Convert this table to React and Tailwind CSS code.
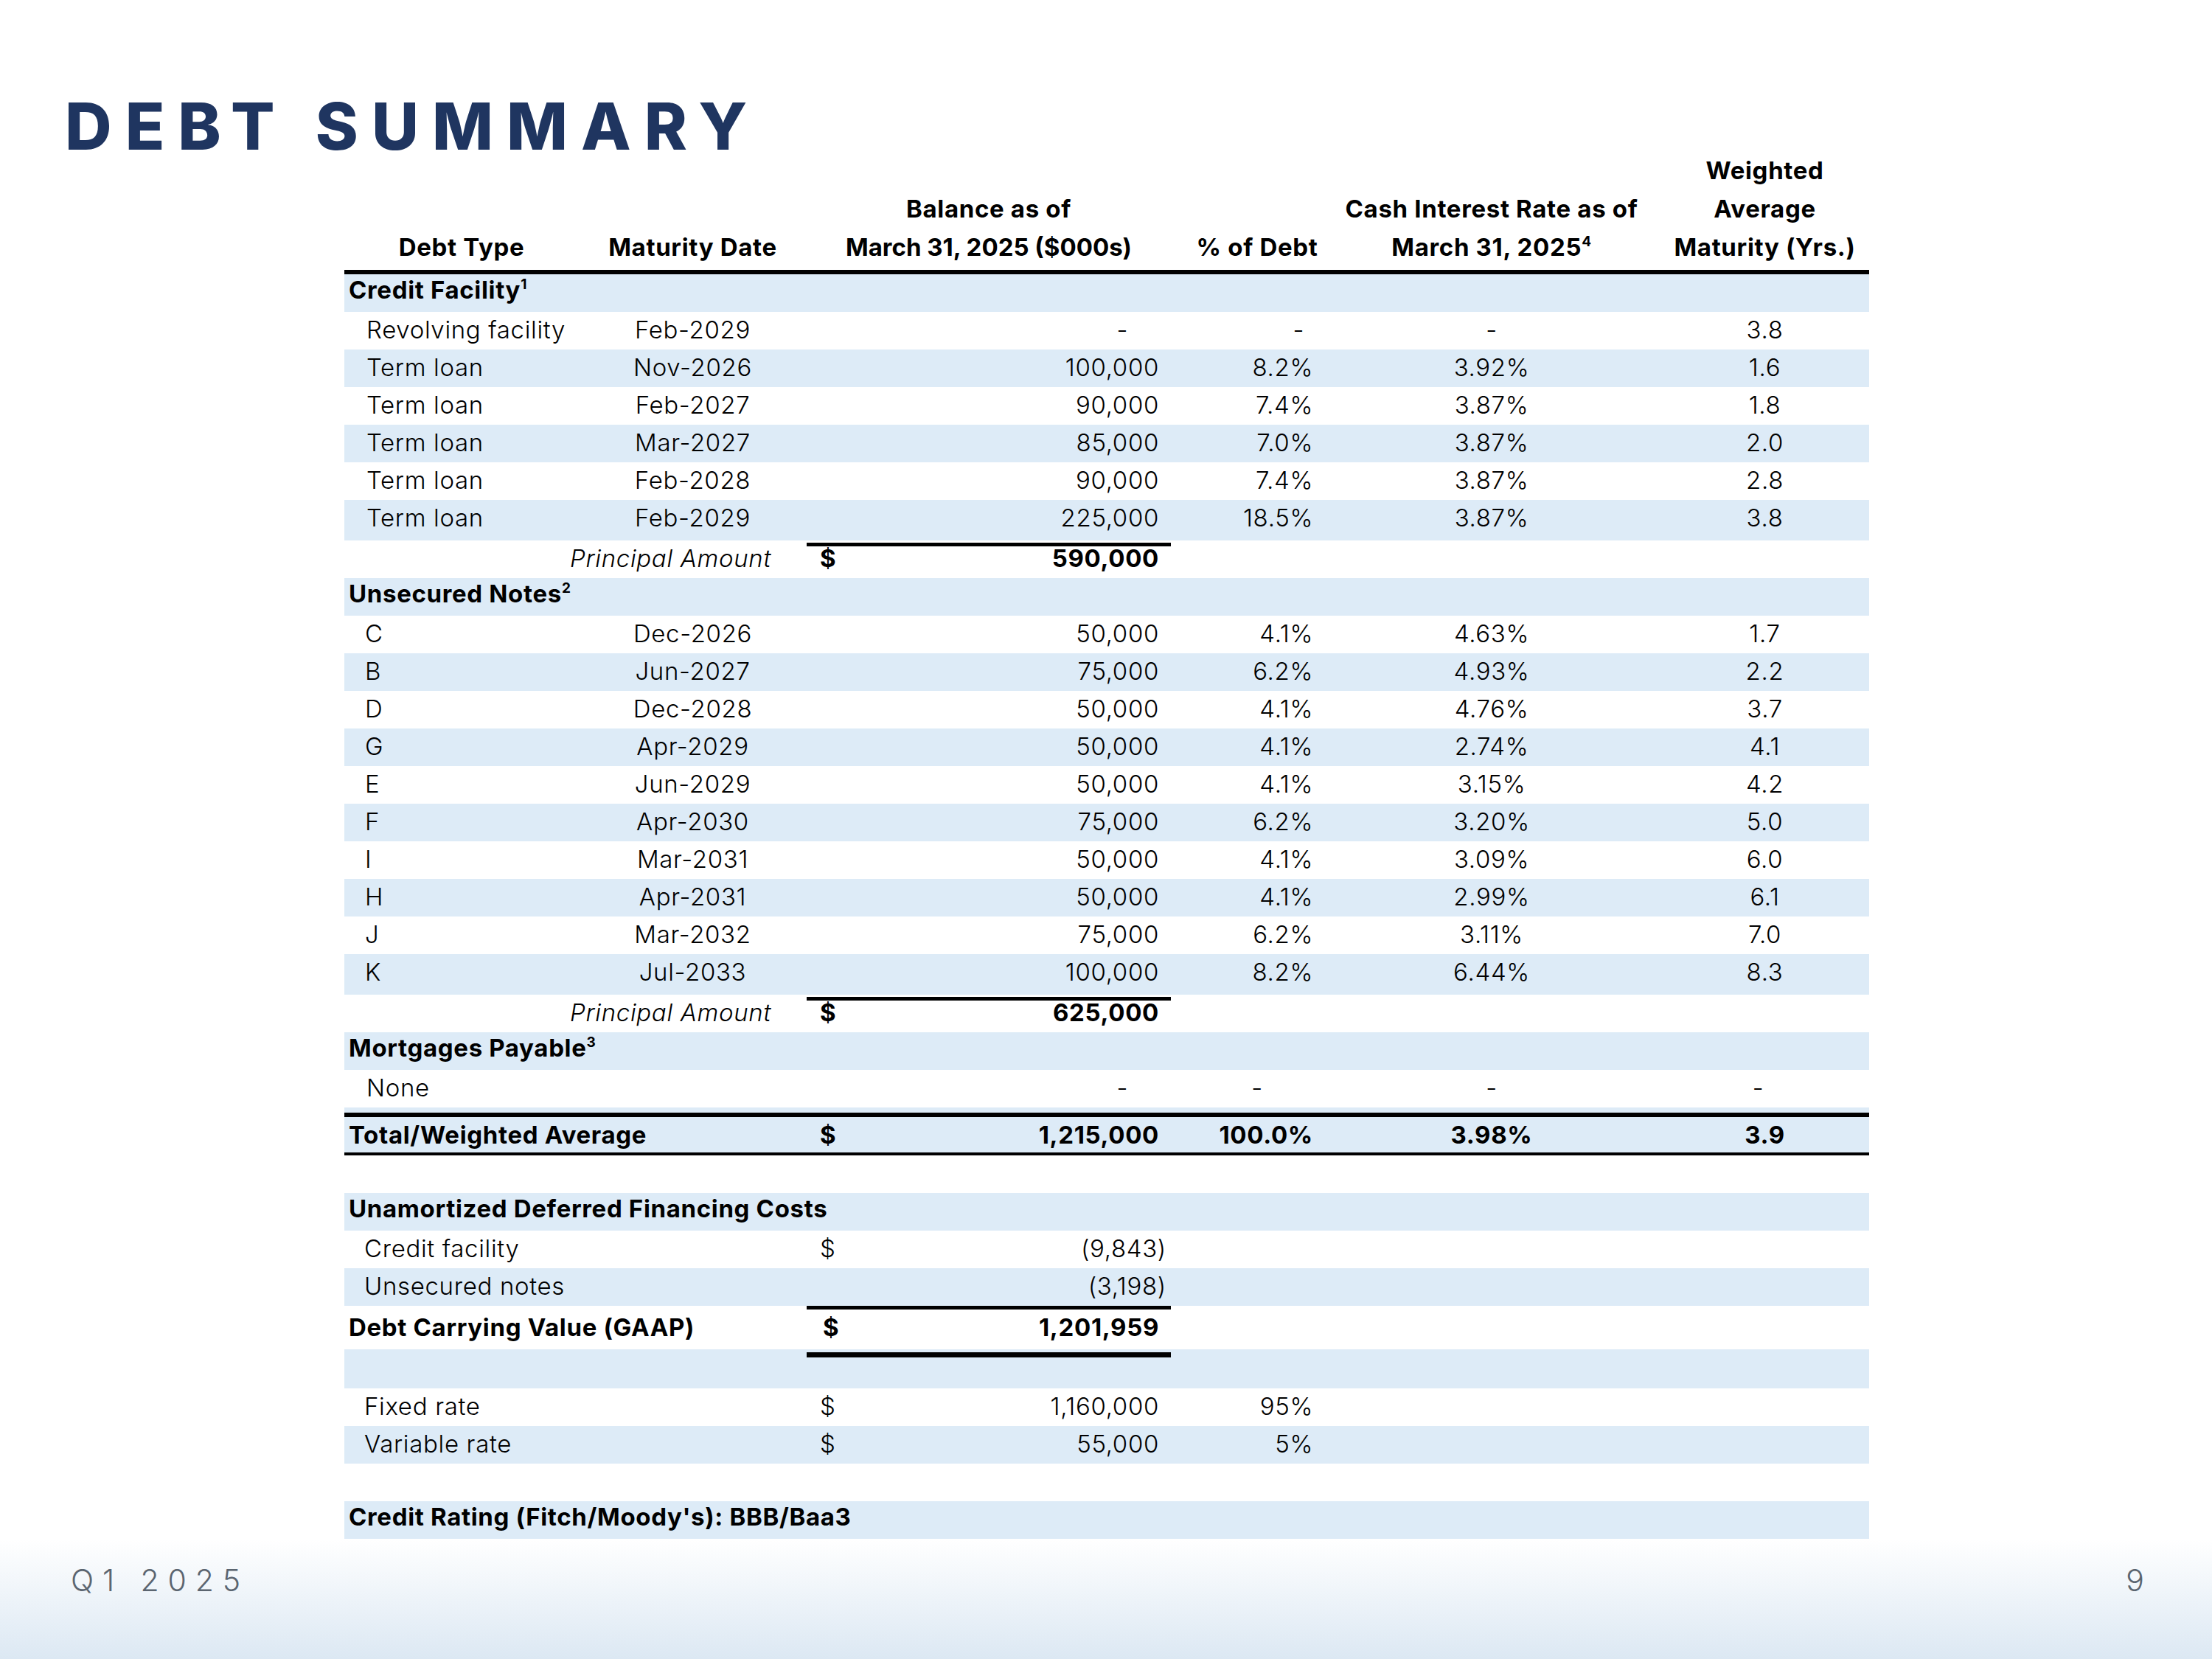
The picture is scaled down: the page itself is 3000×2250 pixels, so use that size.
const ROW = "grid grid-cols-[318px_309px_494px_234px_402px_311px]";
const BLUE = "bg-[#ddebf7]";

function Sup({ children }) {
  return <sup className="relative -top-[13px] text-[19px] font-bold">{children}</sup>;
}

function Section({ bg, label, sup }) {
  return (
    <div className={`h-[51px] flex items-center pl-[6px] pb-[8px] font-bold ${bg}`}>
      <span>
        {label}
        {sup ? <Sup>{sup}</Sup> : null}
      </span>
    </div>
  );
}

function Item({ bg, label, date, bal, pct, rate, wam, line, pl }) {
  const p = line ? "pb-[13px]" : "pb-[8px]";
  return (
    <div className={`${ROW} ${line ? "h-[55px]" : "h-[51px]"} ${bg} font-light`}>
      <div className={`flex items-center ${pl} ${p}`}>{label}</div>
      <div className={`flex items-center justify-center ${p}`}>{date}</div>
      <div
        className={`flex items-center justify-end pb-[8px] ${bal === "-" ? "pr-[58px]" : "pr-[16px]"} ${
          line ? "border-b-[5px] border-black" : ""
        }`}
      >
        {bal}
      </div>
      <div className={`flex items-center justify-end ${pct === "-" ? "pr-[53px]" : "pr-[41px]"} ${p}`}>{pct}</div>
      <div className={`flex items-center justify-center ${p}`}>{rate}</div>
      <div className={`flex items-center justify-center pl-[28px] ${p}`}>{wam}</div>
    </div>
  );
}

function Principal({ amount }) {
  return (
    <div className={`${ROW} h-[51px] bg-white`}>
      <div className="col-span-2 flex items-center justify-end pr-[48px] pb-[20px] italic font-light">Principal Amount</div>
      <div className="flex items-center justify-between pl-[18px] pr-[16px] pb-[20px] font-bold">
        <span>$</span>
        <span>{amount}</span>
      </div>
      <div />
      <div />
      <div />
    </div>
  );
}

function Blank({ bg }) {
  return <div className={`h-[51px] ${bg}`} />;
}

function MoneyRow({ bg, label, dollar, value, pct, paren }) {
  return (
    <div className={`${ROW} h-[51px] ${bg} font-light`}>
      <div className="flex items-center pl-[27px] pb-[10px] whitespace-nowrap">{label}</div>
      <div />
      <div className={`flex items-center justify-between pl-[18px] pb-[10px] ${paren ? "pr-[6px]" : "pr-[16px]"}`}>
        <span>{dollar ? "$" : ""}</span>
        <span>{value}</span>
      </div>
      <div className="flex items-center justify-end pr-[41px] pb-[10px]">{pct}</div>
      <div />
      <div />
    </div>
  );
}

const creditItems = [
  ["Revolving facility", "Feb-2029", "-", "-", "-", "3.8"],
  ["Term loan", "Nov-2026", "100,000", "8.2%", "3.92%", "1.6"],
  ["Term loan", "Feb-2027", "90,000", "7.4%", "3.87%", "1.8"],
  ["Term loan", "Mar-2027", "85,000", "7.0%", "3.87%", "2.0"],
  ["Term loan", "Feb-2028", "90,000", "7.4%", "3.87%", "2.8"],
  ["Term loan", "Feb-2029", "225,000", "18.5%", "3.87%", "3.8"],
];

const noteItems = [
  ["C", "Dec-2026", "50,000", "4.1%", "4.63%", "1.7"],
  ["B", "Jun-2027", "75,000", "6.2%", "4.93%", "2.2"],
  ["D", "Dec-2028", "50,000", "4.1%", "4.76%", "3.7"],
  ["G", "Apr-2029", "50,000", "4.1%", "2.74%", "4.1"],
  ["E", "Jun-2029", "50,000", "4.1%", "3.15%", "4.2"],
  ["F", "Apr-2030", "75,000", "6.2%", "3.20%", "5.0"],
  ["I", "Mar-2031", "50,000", "4.1%", "3.09%", "6.0"],
  ["H", "Apr-2031", "50,000", "4.1%", "2.99%", "6.1"],
  ["J", "Mar-2032", "75,000", "6.2%", "3.11%", "7.0"],
  ["K", "Jul-2033", "100,000", "8.2%", "6.44%", "8.3"],
];

export default function App() {
  return (
    <div className="w-[3000px] h-[2250px] bg-white flex flex-col font-['Inter',sans-serif] text-black overflow-hidden">
      <div className="pl-[88px] pt-[127px] h-[205px]">
        <h1 className="text-[88px] leading-none font-extrabold tracking-[0.205em] text-[#1f3560] whitespace-nowrap">
          DEBT SUMMARY
        </h1>
      </div>

      <div className="ml-[467px] w-[2068px] text-[33px] tracking-[0.02em]">
        {/* Header */}
        <div className={`${ROW} h-[167px] pb-[5px] border-b-[6px] border-black font-bold leading-[52px] text-center`}>
          <div className="flex flex-col justify-end">Debt Type</div>
          <div className="flex flex-col justify-end">Maturity Date</div>
          <div className="flex flex-col justify-end">
            <div>Balance as of</div>
            <div className="whitespace-nowrap tracking-normal">March 31, 2025 ($000s)</div>
          </div>
          <div className="flex flex-col justify-end">% of Debt</div>
          <div className="flex flex-col justify-end whitespace-nowrap">
            <div>Cash Interest Rate as of</div>
            <div>
              March 31, 2025<Sup>4</Sup>
            </div>
          </div>
          <div className="flex flex-col justify-end pl-[28px] whitespace-nowrap">
            <div>Weighted</div>
            <div>Average</div>
            <div>Maturity (Yrs.)</div>
          </div>
        </div>

        <Section bg={BLUE} label="Credit Facility" sup="1" />
        {creditItems.map((r, i) => (
          <Item
            key={"c" + i}
            bg={i % 2 === 0 ? "bg-white" : BLUE}
            label={r[0]}
            date={r[1]}
            bal={r[2]}
            pct={r[3]}
            rate={r[4]}
            wam={r[5]}
            pl="pl-[30px]"
            line={i === creditItems.length - 1}
          />
        ))}
        <Principal amount="590,000" />

        <Section bg={BLUE} label="Unsecured Notes" sup="2" />
        {noteItems.map((r, i) => (
          <Item
            key={"n" + i}
            bg={i % 2 === 0 ? "bg-white" : BLUE}
            label={r[0]}
            date={r[1]}
            bal={r[2]}
            pct={r[3]}
            rate={r[4]}
            wam={r[5]}
            pl="pl-[28px]"
            line={i === noteItems.length - 1}
          />
        ))}
        <Principal amount="625,000" />

        <Section bg={BLUE} label="Mortgages Payable" sup="3" />
        <div className={`${ROW} h-[51px] bg-white font-light`}>
          <div className="flex items-center pl-[30px] pb-[8px]">None</div>
          <div />
          <div className="flex items-center justify-end pr-[58px] pb-[8px]">-</div>
          <div className="flex items-center justify-center pb-[8px]">-</div>
          <div className="flex items-center justify-center pb-[8px]">-</div>
          <div className="flex items-center justify-center pl-[10px] pb-[8px]">-</div>
        </div>

        {/* Total */}
        <div className={`${BLUE} pt-[7px]`}>
          <div className={`${ROW} h-[58px] border-t-[6px] border-b-[4px] border-black font-bold`}>
            <div className="col-span-2 flex items-center pl-[6px] pb-[16px]">Total/Weighted Average</div>
            <div className="flex items-center justify-between pl-[18px] pr-[16px] pb-[16px]">
              <span>$</span>
              <span>1,215,000</span>
            </div>
            <div className="flex items-center justify-end pr-[41px] pb-[16px]">100.0%</div>
            <div className="flex items-center justify-center pb-[16px]">3.98%</div>
            <div className="flex items-center justify-center pl-[28px] pb-[16px]">3.9</div>
          </div>
        </div>

        <Blank bg="bg-white" />

        <Section bg={BLUE} label="Unamortized Deferred Financing Costs" />
        <MoneyRow bg="bg-white" label="Credit facility" dollar value="(9,843)" paren />
        <MoneyRow bg={BLUE} label="Unsecured notes" value="(3,198)" paren />

        <div className={`${ROW} h-[59px] bg-white font-bold`}>
          <div className="col-span-2 flex items-center pl-[6px] pt-[5px] pb-[15px]">Debt Carrying Value (GAAP)</div>
          <div className="flex items-center justify-between pl-[22px] pr-[16px] pb-[8px] border-t-[5px] border-b-[7px] border-b-double border-black">
            <span>$</span>
            <span>1,201,959</span>
          </div>
          <div />
          <div />
          <div />
        </div>

        <div className={`h-[53px] ${BLUE}`} />
        <MoneyRow bg="bg-white" label="Fixed rate" dollar value="1,160,000" pct="95%" />
        <MoneyRow bg={BLUE} label="Variable rate" dollar value="55,000" pct="5%" />
        <Blank bg="bg-white" />
        <Section bg={BLUE} label="Credit Rating (Fitch/Moody's): BBB/Baa3" />
      </div>

      <div className="flex-1 bg-linear-to-b from-white to-[#dce8f3] flex justify-between items-start pt-[36px] pl-[96px] pr-[92px] text-[41px] leading-none font-light text-[#5b6570]">
        <span className="tracking-[0.29em]">Q1 2025</span>
        <span>9</span>
      </div>
    </div>
  );
}
